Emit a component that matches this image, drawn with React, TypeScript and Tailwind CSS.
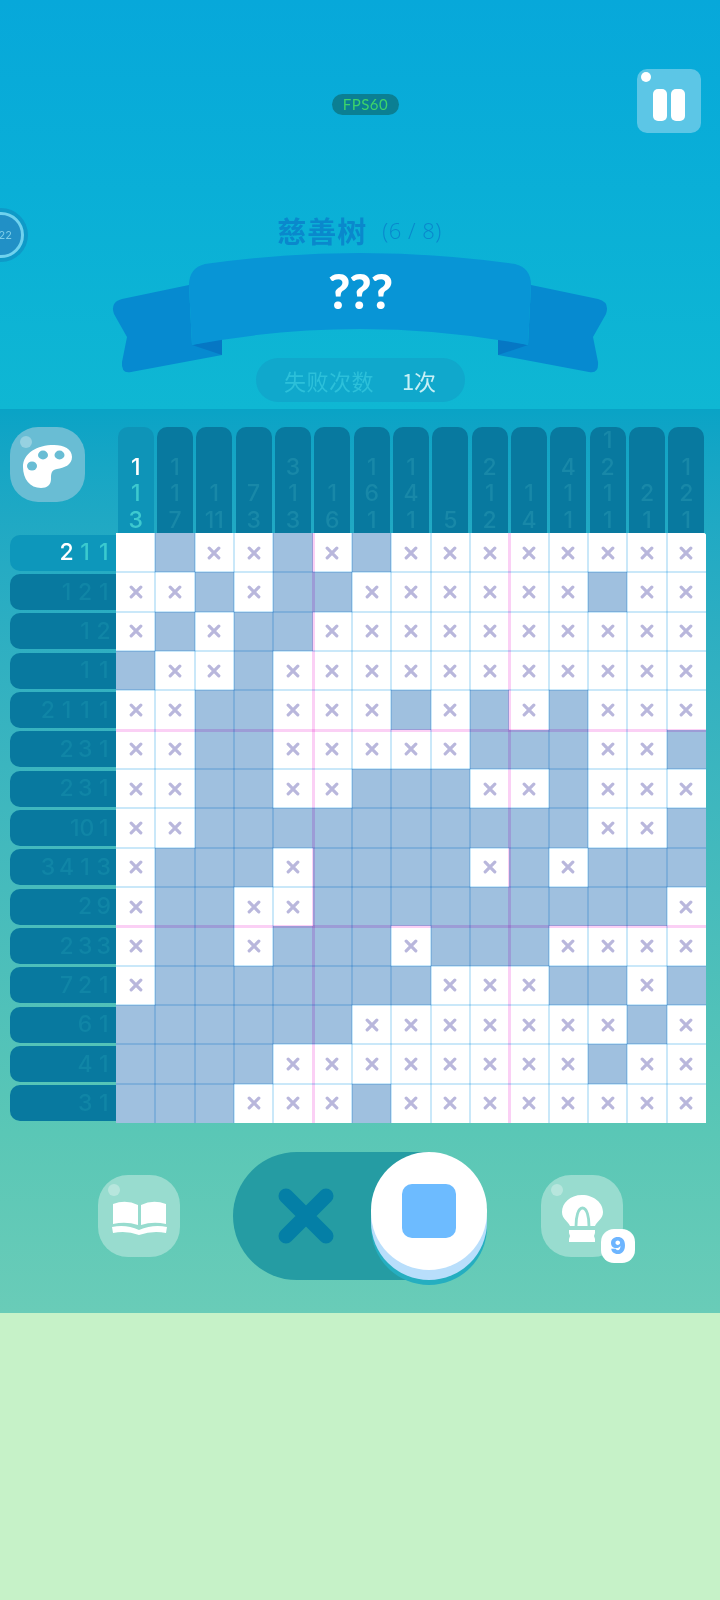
import React from 'react';

const rowClues = [
  [2, 1, 1], [1, 2, 1], [1, 2], [1, 1], [2, 1, 1, 1], [2, 3, 1], [2, 3, 1], [10, 1],
  [3, 4, 1, 3], [2, 9], [2, 3, 3], [7, 2, 1], [6, 1], [4, 1], [3, 1],
];

const colClues = [
  [1, 1, 3], [1, 1, 7], [1, 11], [7, 3], [3, 1, 3], [1, 6], [1, 6, 1], [1, 4, 1],
  [5], [2, 1, 2], [1, 4], [4, 1, 1], [1, 2, 1, 1], [2, 1], [1, 2, 1],
];

// # filled, x crossed, . untouched
const board = [
  '.#xx#x#xxxxxxxx',
  'xx#x##xxxxxx#xx',
  'x#x##xxxxxxxxxx',
  '#xx#xxxxxxxxxxx',
  'xx##xxx#x#x#xxx',
  'xx##xxxxx###xx#',
  'xx##xx###xx#xxx',
  'xx##########xx#',
  'x###x####x#x###',
  'x##xx#########x',
  'x##x###x###xxxx',
  'x#######xxx##x#',
  '######xxxxxxx#x',
  '####xxxxxxxx#xx',
  '###xxx#xxxxxxxx',
];

const CELL = 590 / 15;
const lines = Array.from({ length: 14 }, (_, i) => i + 1);

function Bubble() {
  return <span className="absolute left-[10px] top-[9px] h-[12px] w-[12px] rounded-full bg-white/30" />;
}

function Cross() {
  return (
    <svg width="14" height="14" viewBox="0 0 14 14">
      <path d="M2.2 2.2 11.8 11.8M11.8 2.2 2.2 11.8" stroke="#B9B7DC" strokeWidth="3.2" strokeLinecap="round" />
    </svg>
  );
}

function Ribbon() {
  return (
    <svg width="520" height="125" viewBox="100 250 520 125" className="block">
      <path d="M189 285 122 299Q110 302 114 314L127 337 122 362Q121 374 131 372L222 355V338L192 345Z" fill="#068AD0" />
      <path d="M531 285 598 299Q610 302 606 314L593 337 598 362Q599 374 589 372L498 355V338L528 345Z" fill="#068AD0" />
      <path d="M192 345 222 338V355Z" fill="#0677C4" />
      <path d="M528 345 498 338V355Z" fill="#0677C4" />
      <path d="M189 285Q189 268 205 264Q360 242 515 264Q531 268 531 285L528 345Q360 313 192 345Z" fill="#0895D6" />
    </svg>
  );
}

function Palette() {
  return (
    <svg width="75" height="75" viewBox="0 0 75 75">
      <path
        d="M13 40C13 26 27 18 44 18C54 18 62 22 62 30C62 38 54 41 47 42C41 43 41 47 41 52C41 58 37 61 31 61C20 61 13 52 13 40Z"
        fill="#fff"
      />
      <ellipse cx="33" cy="28" rx="5" ry="4.4" fill="#69BDD4" />
      <ellipse cx="49.5" cy="28" rx="5" ry="4.4" fill="#69BDD4" />
      <ellipse cx="22" cy="39" rx="5" ry="4.6" fill="#69BDD4" />
    </svg>
  );
}

function Book() {
  return (
    <svg width="82" height="82" viewBox="0 0 82 82">
      <path d="M15 29Q28 24 40 30V50Q28 46 15 49Z" fill="#fff" />
      <path d="M68 29Q55 24 43 30V50Q55 46 68 49Z" fill="#fff" />
      <path d="M14 52Q28 49 41 55Q55 49 69 52L68 58Q55 55 41 60Q28 55 15 58Z" fill="#fff" />
    </svg>
  );
}

function Bulb() {
  return (
    <svg width="82" height="82" viewBox="0 0 82 82">
      <path d="M41 20C53 20 62 28 62 37C62 44 56 46 54 51H29C27 46 21 44 21 37C21 28 29 20 41 20Z" fill="#fff" />
      <path d="M35 51C35 42 37 33 41.5 33C46 33 48 42 48 51" fill="none" stroke="#98DCCF" strokeWidth="2.8" />
      <path d="M28 55H54V58L53 61 54 64V67H28V64L29 61 28 58Z" fill="#fff" />
    </svg>
  );
}

export default function App() {
  return (
    <div className="relative flex h-[1600px] w-[720px] flex-col overflow-hidden bg-[#C6F2C8] font-['Inter',sans-serif]">
      {/* Header */}
      <header className="relative flex h-[409px] flex-col items-center bg-gradient-to-b from-[#07A8DA] to-[#0FB7D3] pt-[94px]">
        <div className="ml-[11px] flex h-[21px] w-[67px] items-center justify-center rounded-full bg-[#0B7F93] font-['Lato',sans-serif] text-[15px] tracking-[0.5px] text-[#3CD46A]">
          FPS60
        </div>

        <button className="absolute left-[637px] top-[69px] flex h-[64px] w-[64px] items-center justify-center gap-[4px] rounded-[10px] bg-[#5CC6E6]">
          <span className="absolute left-[4px] top-[3px] h-[10px] w-[10px] rounded-full bg-white" />
          <span className="mt-[7px] h-[32px] w-[14px] rounded-[5px] bg-white" />
          <span className="mt-[7px] h-[32px] w-[14px] rounded-[5px] bg-white" />
        </button>

        {/* Timer */}
        <div className="absolute left-[-26px] top-[208px] flex h-[54px] w-[54px] items-center justify-center rounded-full bg-[#0E9AC8]">
          <div className="flex h-[46px] w-[46px] items-center justify-end rounded-full border-[3px] border-[#6FD2EE] bg-[#2190C6] pr-[9px] text-[11px] text-[#7CCDE8]">
            22
          </div>
        </div>

        <div className="mt-[98px] ml-[-1px] flex h-[34px] items-center gap-[15px] text-[#0A88CC]">
          <span className="font-['Noto_Sans_CJK_SC',sans-serif] text-[29px] font-bold leading-none tracking-[1px]">慈善树</span>
          <span className="font-['Open_Sans',sans-serif] text-[22px] font-light leading-none tracking-[0.5px]">(6 / 8)</span>
        </div>

        <div className="relative mt-[3px]">
          <Ribbon />
          <span className="absolute left-0 right-0 top-[19px] text-center font-['Lato',sans-serif] text-[48px] font-black leading-[44px] tracking-[-1px] text-white">
            ???
          </span>
        </div>

        <div className="relative -mt-[17px] flex h-[44px] w-[209px] items-center justify-center gap-[28px] rounded-[22px] bg-[#10A8CC] font-['Noto_Sans_CJK_SC',sans-serif] text-[22px]">
          <span className="tracking-[0.5px] text-[#2CC0DA]">失败次数</span>
          <span className="text-[#C8F0F6]">1次</span>
        </div>
      </header>

      {/* Board panel */}
      <main className="flex h-[904px] flex-col bg-gradient-to-b from-[#09A3C6] via-[#5AC7B6] via-80% to-[#69CCB8]">
        <div className="flex pl-[10px] pt-[18px]">
          <div className="w-[106px]">
            <button className="relative h-[75px] w-[75px] rounded-[28px] bg-[#69BDD4]">
              <Bubble />
              <Palette />
            </button>
          </div>
          <div className="grid h-[106px] w-[590px] grid-cols-15">
            {colClues.map((nums, c) => (
              <div
                key={c}
                className={`mx-[1.66px] flex flex-col items-center justify-end rounded-t-[10px] pb-[3px] text-[23px] font-medium leading-[26.6px] ${
                  c === 0 ? 'bg-[#0E94B8] text-[#3DC9CF]' : 'bg-[#08799F] text-[#1888A8]'
                }`}
              >
                {nums.map((n, i) => (
                  <span key={i} className={c === 0 && i === 0 ? 'text-white' : ''}>
                    {n}
                  </span>
                ))}
              </div>
            ))}
          </div>
        </div>

        <div className="flex pl-[10px]">
          <div className="grid h-[590px] w-[106px] grid-rows-15">
            {rowClues.map((nums, r) => (
              <div key={r} className="py-[1.66px]">
                <div
                  className={`flex h-full items-center justify-end rounded-l-[10px] pr-[3px] text-[23px] font-medium ${
                    r === 0 ? 'bg-[#0D97BB] text-[#3ACACF]' : 'bg-[#08799F] text-[#1085A6]'
                  }`}
                >
                  {nums.map((n, i) => (
                    <span key={i} className={`min-w-[18.6px] text-center ${r === 0 && i === 0 ? 'text-white' : ''}`}>
                      {n}
                    </span>
                  ))}
                </div>
              </div>
            ))}
          </div>

          <div className="relative grid h-[590px] w-[590px] grid-cols-15 grid-rows-15 overflow-hidden rounded-tr-[3px] bg-white">
            {board.flatMap((row, r) =>
              row.split('').map((cell, c) => (
                <div
                  key={`${r}-${c}`}
                  className={`flex items-center justify-center ${cell === '#' ? 'bg-[#9FC0DF]' : 'bg-white'}`}
                >
                  {cell === 'x' && <Cross />}
                </div>
              ))
            )}
            {/* grid lines sit on top and tint whatever is under them */}
            {lines.map((i) => (
              <div
                key={`v${i}`}
                className={`absolute bottom-0 top-0 mix-blend-multiply ${
                  i % 5 === 0 ? 'w-[3px] bg-[#FBD0F5]' : 'w-[2px] bg-[#CAE8F9]'
                }`}
                style={{ left: i * CELL - 1 }}
              />
            ))}
            {lines.map((i) => (
              <div
                key={`h${i}`}
                className={`absolute left-0 right-0 mix-blend-multiply ${
                  i % 5 === 0 ? 'h-[3px] bg-[#FBD0F5]' : 'h-[2px] bg-[#CAE8F9]'
                }`}
                style={{ top: i * CELL - 1 }}
              />
            ))}
          </div>
        </div>

        {/* Controls */}
        <div className="mt-[29px] flex items-center pl-[98px]">
          <button className="relative h-[82px] w-[82px] rounded-[30px] bg-[#98DCCF]">
            <Bubble />
            <Book />
          </button>

          <div className="relative ml-[53px] flex h-[128px] w-[254px] items-center rounded-full bg-[#259CA3] pl-[44px]">
            <svg width="58" height="58" viewBox="0 0 58 58">
              <path d="M9 9 49 49M49 9 9 49" stroke="#047FA6" strokeWidth="15" strokeLinecap="round" />
            </svg>
            <div className="absolute right-0 top-0 flex h-[118px] w-[116px] items-center justify-center rounded-full bg-white shadow-[0_10px_0_#B8DEFB,0_15px_0_#25AEC0]">
              <span className="h-[54px] w-[54px] rounded-[10px] bg-[#6DBBFF]" />
            </div>
          </div>

          <button className="relative ml-[54px] h-[82px] w-[82px] rounded-[30px] bg-[#98DCCF]">
            <Bubble />
            <Bulb />
            <span className="absolute left-[60px] top-[54px] flex h-[34px] w-[34px] items-center justify-center rounded-[13px] bg-white font-['Inter',sans-serif] text-[23px] font-black text-[#6DB5FF]">
              9
            </span>
          </button>
        </div>
      </main>
    </div>
  );
}
